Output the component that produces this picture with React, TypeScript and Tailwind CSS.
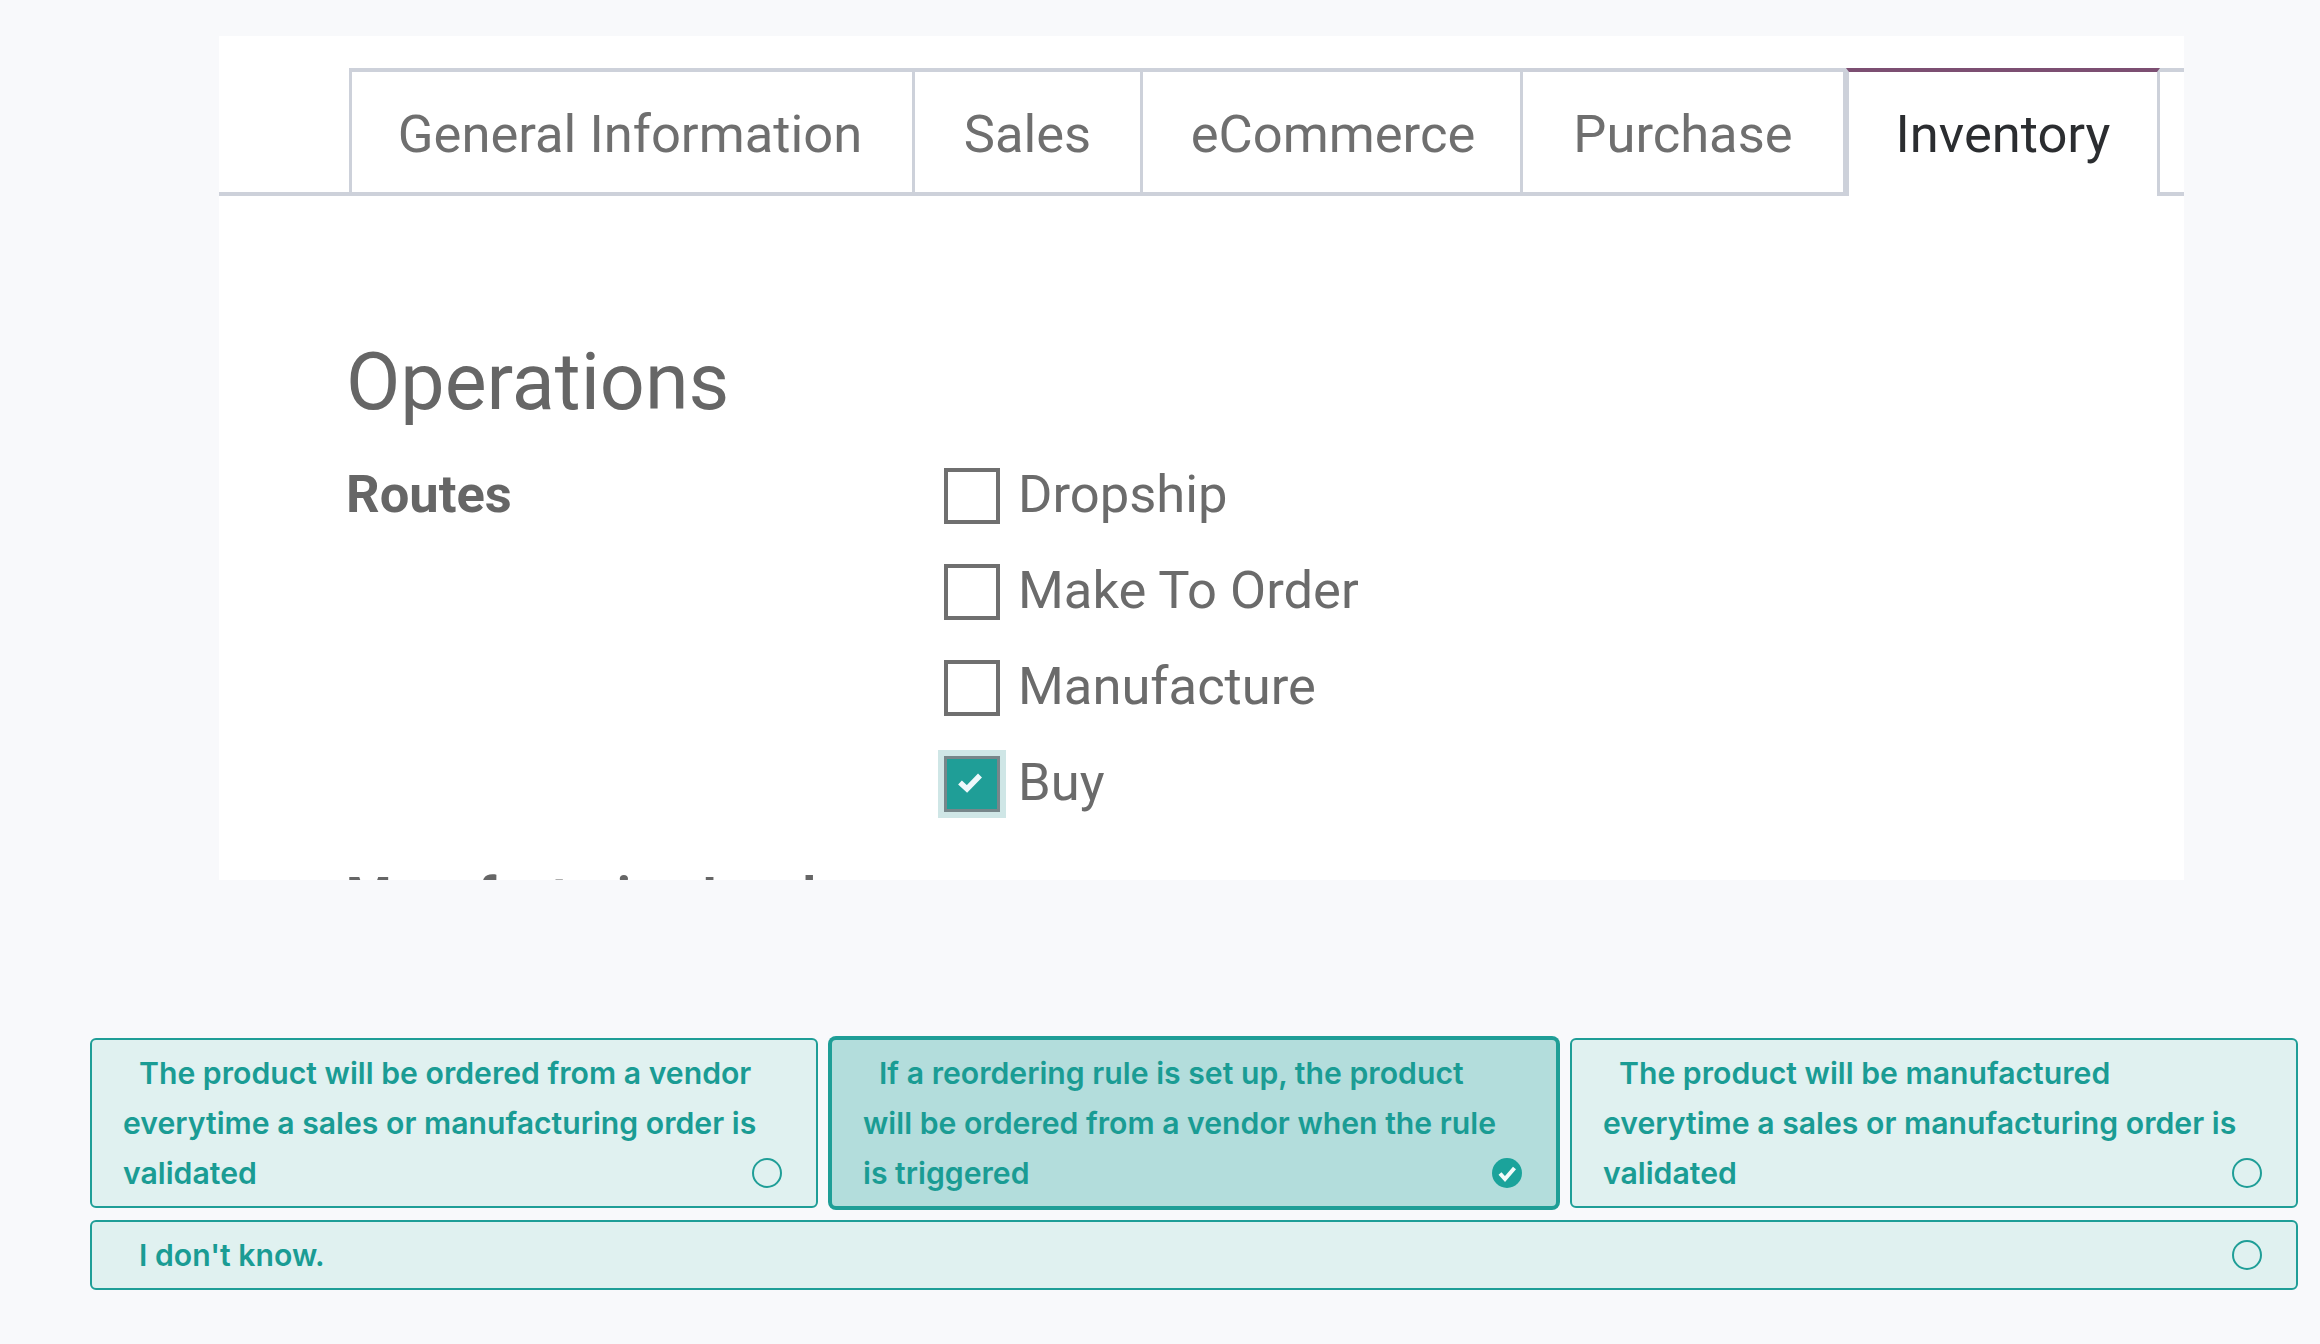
import React from "react";

const tabs = [
  { label: "General Information", w: "w-[566px] pr-[4px]" },
  { label: "Sales", w: "w-[228px]" },
  { label: "eCommerce", w: "w-[380px] pl-[3px]" },
  { label: "Purchase", w: "w-[323px]" },
];

function Check({ label, checked }: { label: string; checked?: boolean }) {
  return (
    <div className="flex h-[96px] items-center">
      <div
        className={
          checked
            ? "flex h-[56px] w-[56px] items-center justify-center border-[3px] border-[#77868a] bg-[#1f9e97] shadow-[0_0_0_6px_#cfe6e6]"
            : "h-[56px] w-[56px] border-[4px] border-[#6f6f6f] bg-white"
        }
      >
        {checked && (
          <svg width="26" height="22" viewBox="0 0 26 22" className="mr-[4px] mb-[4px]">
            <path d="M3 11.5 L10 18 L23 4.5" fill="none" stroke="#eef8fb" strokeWidth="5.5" />
          </svg>
        )}
      </div>
      <span className="ml-[18px] -translate-y-[2px] text-[52.5px] leading-[96px] text-[#6b6b6b]">{label}</span>
    </div>
  );
}

function Mark({ selected }: { selected?: boolean }) {
  return (
    <span className="absolute bottom-[18px] right-[34px] h-[30px] w-[30px]">
      {selected ? (
        <svg width="30" height="30" viewBox="0 0 30 30">
          <circle cx="15" cy="15" r="15" fill="#1ba39b" />
          <path d="M8 15.5 L13 21 L22.5 10" fill="none" stroke="#f2fbfa" strokeWidth="4" />
        </svg>
      ) : (
        <span className="block h-[30px] w-[30px] rounded-full border-[2.5px] border-[#1f9e97]" />
      )}
    </span>
  );
}

function Option({ text, selected, className = "" }: { text: string; selected?: boolean; className?: string }) {
  return (
    <div
      className={
        "relative rounded-[6px] border-2 border-[#1f9e97] py-[8px] pl-[31px] pr-[48px] " +
        (selected ? "bg-[#b3dddc] ring-2 ring-[#1f9e97] " : "bg-[#e0f1f0] ") +
        className
      }
    >
      <p className="indent-[16px] font-['Inter',sans-serif] text-[30.2px] font-semibold leading-[50px] text-[#1a9c94]">
        {text}
      </p>
      <Mark selected={selected} />
    </div>
  );
}

export default function App() {
  return (
    <div className="min-h-[1344px] bg-[#f8f9fb] pt-[36px] font-['Roboto',sans-serif]">
      <div className="ml-[219px] h-[844px] w-[1965px] overflow-hidden bg-white blur-[0.5px]">
        <div className="pt-[32px]">
          <div className="flex h-[128px] border-b-[4px] border-[#cdd1da]">
            <div className="w-[130px] shrink-0" />
            {tabs.map((t, i) => (
              <div
                key={t.label}
                className={
                  "box-border flex shrink-0 items-center justify-center border-t-[4px] border-r-[3px] border-[#cdd1da] pt-[5px] text-[52.5px] text-[#6f6f6f] " +
                  (i === 0 ? "border-l-[3px] " : "") +
                  t.w
                }
              >
                {t.label}
              </div>
            ))}
            <div className="relative -mb-[4px] box-border flex h-[128px] w-[314px] shrink-0 items-center justify-center border-t-[4px] border-r-[3px] border-l-[3px] border-t-[#7c4f72] border-r-[#cdd1da] border-l-[#cdd1da] bg-white text-[52.5px] text-[#2b2d30]">
              Inventory
            </div>
            <div className="flex-1 border-t-[4px] border-[#cdd1da]" />
          </div>
        </div>
        <div className="pl-[127px] pt-[138px]">
          <h2 className="text-[79px] font-normal leading-[96px] text-[#666666]">Operations</h2>
          <div className="mt-[18px] flex">
            <div className="w-[598px] shrink-0 -translate-y-[2px] text-[52.5px] font-bold leading-[96px] text-[#666666]">Routes</div>
            <div>
              <Check label="Dropship" />
              <Check label="Make To Order" />
              <Check label="Manufacture" />
              <Check label="Buy" checked />
            </div>
          </div>
          <div className="mt-[17px] w-[540px] text-[52px] font-bold leading-[96px] text-[#666666]">
            Manufacturing Lead Time
          </div>
        </div>
      </div>
      <div className="ml-[90px] mt-[158px] w-[2208px]">
        <div className="grid grid-cols-3 gap-[12px]">
          <Option text="The product will be ordered from a vendor everytime a sales or manufacturing order is validated" />
          <Option selected text="If a reordering rule is set up, the product will be ordered from a vendor when the rule is triggered" />
          <Option text="The product will be manufactured everytime a sales or manufacturing order is validated" />
        </div>
        <Option className="mt-[12px]" text="I don't know." />
      </div>
    </div>
  );
}
